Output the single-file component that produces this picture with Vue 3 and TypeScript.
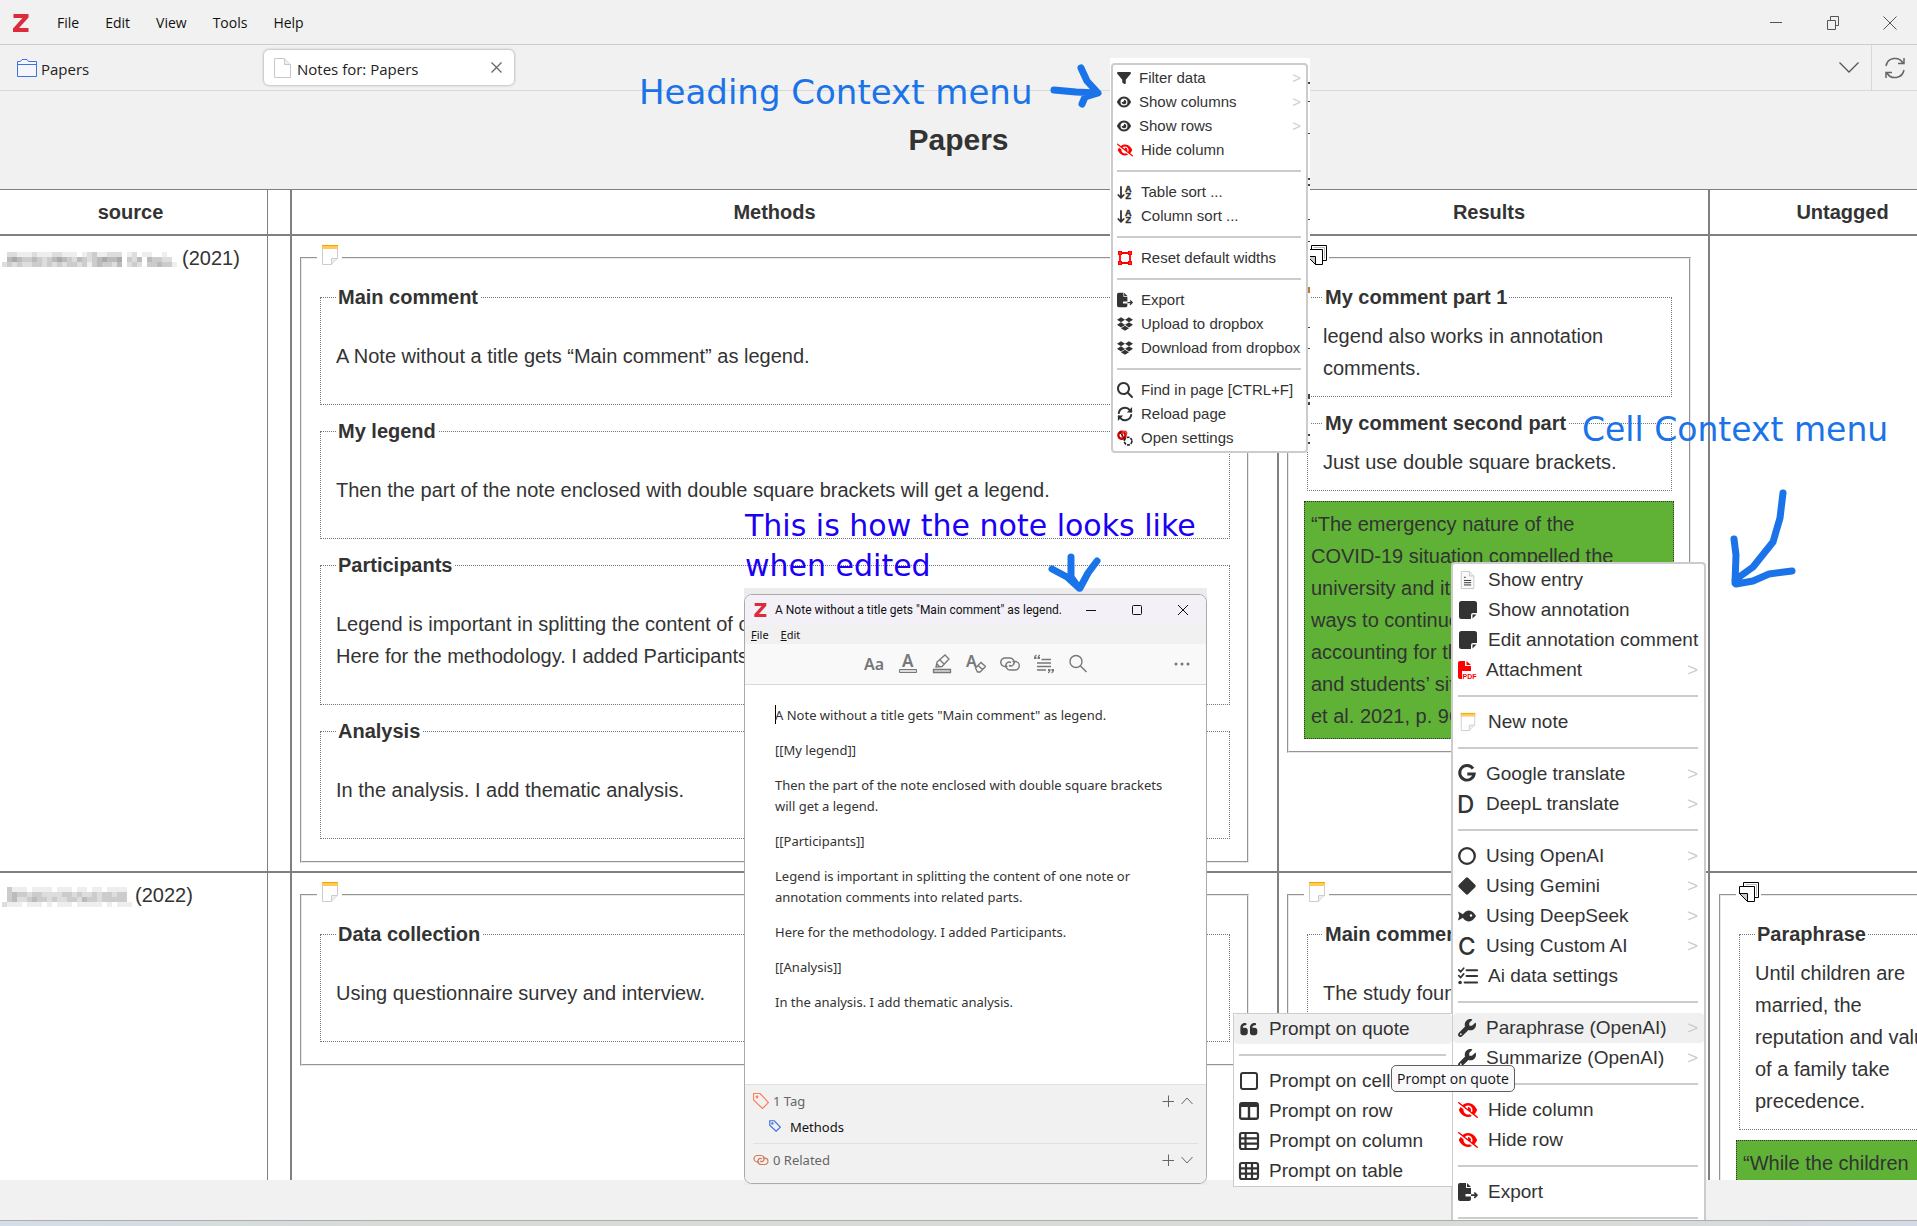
<script setup lang="ts">
interface MenuRow {
  icon: string
  label: string
  wide?: boolean
  more?: boolean
  danger?: boolean
  active?: boolean
}
interface Part {
  legend?: string
  lines: string[]
  spaced?: boolean
  quote?: boolean
}
interface Card {
  kind: 'note' | 'annotation'
  parts: Part[]
}
interface PaperRow {
  year: string
  mask: string[]
  maskWidth: number
  cells: (Card | null)[]
}

const eye =
  'M288 32c-80.8 0-145.5 36.8-192.6 80.6C48.6 156 17.3 208 2.5 243.7c-3.3 7.9-3.3 16.7 0 24.6C17.3 304 48.6 356 95.4 399.4C142.5 443.2 207.2 480 288 480s145.5-36.8 192.6-80.6c46.8-43.5 78.1-95.4 93-131.1c3.3-7.9 3.3-16.7 0-24.6c-14.9-35.7-46.2-87.7-93-131.1C433.5 68.8 368.8 32 288 32zM144 256a144 144 0 1 1 288 0 144 144 0 1 1 -288 0zm144-64c0 35.3-28.7 64-64 64c-7.1 0-13.9-1.2-20.3-3.3c-5.5-1.8-11.9 1.6-11.7 7.4c.3 6.9 1.3 13.8 3.2 20.7c13.7 51.2 66.4 81.6 117.6 67.9s81.6-66.4 67.9-117.6c-11.1-41.5-47.8-69.4-88.6-71.1c-5.8-.2-9.2 6.1-7.4 11.7c2.1 6.4 3.3 13.2 3.3 20.3z'
const eyeSlash =
  'M38.8 5.1C28.4-3.1 13.3-1.2 5.1 9.2S-1.2 34.7 9.2 42.9l592 464c10.4 8.2 25.5 6.3 33.7-4.1s6.3-25.5-4.1-33.7L525.6 386.7c39.6-40.6 66.4-86.1 79.9-118.4c3.3-7.9 3.3-16.7 0-24.6c-14.9-35.7-46.2-87.7-93-131.1C465.5 68.8 400.8 32 320 32c-68.2 0-125 26.3-169.3 60.8L38.8 5.1zM223.1 149.5C248.6 126.2 282.7 112 320 112c79.5 0 144 64.5 144 144c0 24.9-6.3 48.3-17.4 68.7L408 294.5c8.4-19.3 10.6-41.4 4.8-63.3c-11.1-41.5-47.8-69.4-88.6-71.1c-5.8-.2-9.2 6.1-7.4 11.7c2.1 6.4 3.3 13.2 3.3 20.3c0 10.2-2.4 19.8-6.6 28.3l-90.3-70.8zM373 389.9c-16.4 6.5-34.3 10.1-53 10.1c-79.5 0-144-64.5-144-144c0-6.9 .5-13.6 1.4-20.2L83.1 161.5C60.3 191.2 44 220.8 34.5 243.7c-3.3 7.9-3.3 16.7 0 24.6c14.9 35.7 46.2 87.7 93 131.1C174.5 443.2 239.2 480 320 480c47.8 0 89.9-12.9 126.2-32.5L373 389.9z'

// Each entry: viewBox and the inner markup of the icon.
const icons: Record<string, [string, string]> = {
  filter: ['0 0 512 512', '<path d="M3.9 54.9C10.5 40.9 24.5 32 40 32H472c15.5 0 29.5 8.9 36.1 22.9s4.6 30.5-5.2 42.5L320 320.9V448c0 12.1-6.8 23.2-17.7 28.6s-23.8 4.3-33.5-3l-64-48c-8.1-6-12.8-15.5-12.8-25.6V320.9L9 97.3C-.7 85.4-2.8 68.8 3.9 54.9z"/>'],
  eye: ['0 0 576 512', `<path d="${eye}"/>`],
  hide: ['0 0 640 512', `<path d="${eyeSlash}"/>`],
  sort: ['0 0 16 16', '<path d="M4 3v10.500M1.300 11L4 13.800 6.700 11" fill="none" stroke="currentColor" stroke-width="1.800" stroke-linecap="round" stroke-linejoin="round"/><text x="8" y="8" font-family="Liberation Sans, sans-serif" font-weight="700" font-size="9" stroke="currentColor" stroke-width="0.500">A</text><text x="8.500" y="15" font-family="Liberation Sans, sans-serif" font-weight="700" font-size="9" stroke="currentColor" stroke-width="0.500">Z</text>'],
  frame: ['0 0 16 16', '<path d="M3 3h10v10H3z" fill="none" stroke="currentColor" stroke-width="1.800"/><path d="M1 1h4v4H1zM11 1h4v4h-4zM1 11h4v4H1zM11 11h4v4h-4z"/><path d="M2.500 2.500h1v1h-1zM12.500 2.500h1v1h-1zM2.500 12.500h1v1h-1zM12.500 12.500h1v1h-1z" fill="#faa"/>'],
  export: ['0 0 20 18', '<path d="M0 2a2 2 0 0 1 2-2h6v5h5v6H7.500v2.400H13V16a2 2 0 0 1-2 2H2a2 2 0 0 1-2-2z"/><path d="M9 0l4 4H9z"/><path d="M13 12.200h6M16.300 9.500l2.700 2.700-2.700 2.700" fill="none" stroke="currentColor" stroke-width="1.700" stroke-linejoin="round"/>'],
  dropbox: ['0 0 528 512', '<path d="M264.4 116.300l-132 84.300 132 84.300-132 84.300L0 284.100l132.300-84.300L0 116.300 132.300 32l132.100 84.300zM131.600 395.700l132-84.300 132 84.300-132 84.300-132-84.300zm132.800-111.600l132-84.300-132-83.600L395.700 32 528 116.300l-132.300 84.300L528 284.800l-132.300 84.300-131.300-85z"/>'],
  search: ['0 0 512 512', '<path d="M416 208c0 45.900-14.900 88.300-40 122.700L502.600 457.400c12.500 12.500 12.500 32.800 0 45.300s-32.800 12.500-45.300 0L330.700 376c-34.400 25.200-76.800 40-122.700 40C93.100 416 0 322.900 0 208S93.100 0 208 0S416 93.100 416 208zM208 352a144 144 0 1 0 0-288 144 144 0 1 0 0 288z"/>'],
  reload: ['0 0 18 18', '<path d="M2 8a7.100 7.100 0 0 1 12.500-3.400L16 6.200M16 10a7.100 7.100 0 0 1-12.500 3.400L2 11.800" fill="none" stroke="currentColor" stroke-width="2.200" stroke-linecap="round"/><path d="M17 1.200v6h-6zM1 16.800v-6h6z"/>'],
  settings: ['0 0 18 18', '<circle cx="5.500" cy="6" r="4" fill="none" stroke="#c00" stroke-width="2.600"/><path d="M6 9V3.500q0-2 3-2 3 1 1 4.500" fill="none" stroke="#e33" stroke-width="1.800"/><path d="M3 2l5 7" stroke="#600" stroke-width="1.300"/><circle cx="12.500" cy="12.500" r="4.300" fill="#fff" stroke="#222" stroke-width="1.800" stroke-dasharray="3.400 1.100"/>'],
  entry: ['0 0 18 20', '<path d="M1.500.500h9l5 5v14h-14z" fill="#fafafa" stroke="#c4c4c4"/><path d="M10.500.500v5h5" fill="#eee" stroke="#c4c4c4"/><path d="M4.500 7h2M4.500 10.500h8M4.500 13h8M4.500 15.500h8" stroke="#333" stroke-width="1.100"/>'],
  sticky: ['0 0 18 18', '<path d="M2.500 0h13A2.500 2.500 0 0 1 18 2.500V12h-4a2 2 0 0 0-2 2v4H2.500A2.500 2.500 0 0 1 0 15.500v-13A2.500 2.500 0 0 1 2.500 0z"/><path d="M13.500 17.500v-4h4z"/>'],
  pdf: ['0 0 18 18', '<path d="M0 2a2 2 0 0 1 2-2h5v5h6v5H4v8H2a2 2 0 0 1-2-2z"/><path d="M8.500 0L13 4H8.500z"/><text x="4.500" y="17.800" font-family="Liberation Sans, sans-serif" font-weight="700" font-size="7">PDF</text>'],
  note: ['0 0 18 20', '<path d="M1.500.500h15v13l-6 6h-9z" fill="#fff" stroke="#ccc"/><path d="M16.500 13.500h-6v6" fill="#eee" stroke="#ccc"/><path d="M1 0h16v4H1z" fill="#ffca5c"/><path d="M1 .500h16" stroke="#f5a300"/>'],
  google: ['0 0 18 18', '<path d="M15 3.600A7.300 7.300 0 1 0 16.200 9H9.300" fill="none" stroke="currentColor" stroke-width="2.900"/>'],
  dletter: ['0 0 18 18', '<text x="-1" y="17.500" font-family="Inter, sans-serif" font-weight="500" font-size="24">D</text>'],
  cletter: ['0 0 18 18', '<text x="0" y="17.500" font-family="Inter, sans-serif" font-weight="500" font-size="24">C</text>'],
  ring: ['0 0 18 18', '<circle cx="9" cy="9" r="7.800" fill="none" stroke="currentColor" stroke-width="2.300"/>'],
  diamond: ['0 0 18 18', '<path d="M9 .200q.700 0 1.300.700l6.900 6.900q1.200 1.200 0 2.400l-6.900 6.900q-1.300 1.300-2.600 0L.800 10.200q-1.200-1.200 0-2.400L7.700.900Q8.300.200 9 .200z"/>'],
  fish: ['0 0 18 18', '<path d="M0 4.500q2.500 1 4.800 2.800Q7.500 3.500 11 3.500 15 3.800 18 9q-3 5.200-7 5.500-3.500 0-6.200-3.800Q2.500 12.500 0 13.500L1.200 9z"/><circle cx="13" cy="8.500" r="1.200" fill="#fff"/>'],
  tasks: ['0 0 21 18', '<path d="M9 3h11M9 9h11M7 15.800h13" stroke="currentColor" stroke-width="2.200" stroke-linecap="round"/><path d="M.800 2.600l2 2L6 .800M.800 8.600l2 2L6 6.800" fill="none" stroke="currentColor" stroke-width="1.800" stroke-linecap="round"/><circle cx="2.200" cy="15.800" r="1.900"/>'],
  wrench: ['0 0 512 512', '<path d="M352 320c88.400 0 160-71.600 160-160c0-15.300-2.200-30.100-6.200-44.200c-3.100-10.800-16.400-13.200-24.300-5.300l-76.800 76.800c-3 3-7.100 4.700-11.300 4.700H336c-8.800 0-16-7.200-16-16V118.600c0-4.200 1.700-8.300 4.700-11.300l76.800-76.800c7.900-7.900 5.400-21.200-5.300-24.300C382.100 2.200 367.300 0 352 0C263.600 0 192 71.600 192 160c0 19.100 3.400 37.500 9.500 54.500L19.900 396.100C7.200 408.800 0 426.100 0 444.100C0 481.600 30.400 512 67.900 512c18 0 35.300-7.200 48-19.900L297.500 310.500c17 6.200 35.400 9.500 54.500 9.500zM80 408a24 24 0 1 1 0 48 24 24 0 1 1 0-48z"/>'],
  quote: ['20 20 410 470', '<path d="M0 216C0 149.700 53.700 96 120 96h8c17.700 0 32 14.300 32 32s-14.300 32-32 32h-8c-30.900 0-56 25.100-56 56v8h64c35.300 0 64 28.700 64 64v64c0 35.300-28.700 64-64 64H64c-35.300 0-64-28.700-64-64V216zm250 0c0-66.300 53.700-120 120-120h8c17.700 0 32 14.300 32 32s-14.300 32-32 32h-8c-30.900 0-56 25.100-56 56v8h64c35.300 0 64 28.700 64 64v64c0 35.300-28.700 64-64 64h-64c-35.300 0-64-28.700-64-64V216z"/>'],
  square: ['0 0 20 18', '<rect x="2" y="1" width="16" height="16" rx="2" fill="none" stroke="currentColor" stroke-width="2"/>'],
  columns: ['0 0 20 18', '<path d="M3 0h14a3 3 0 0 1 3 3v12a3 3 0 0 1-3 3H3a3 3 0 0 1-3-3V3a3 3 0 0 1 3-3zM2.200 5v10.600h6.600V5zM11.200 5v10.600h6.600V5z" fill-rule="evenodd"/>'],
  list: ['0 0 20 18', '<rect x="1" y="1" width="18" height="16" rx="2" fill="none" stroke="currentColor" stroke-width="2.200"/><path d="M1 6.300h18M1 11.700h18M6.500 1v16" stroke="currentColor" stroke-width="2.200"/>'],
  table: ['0 0 20 18', '<rect x="1" y="1" width="18" height="16" rx="2" fill="none" stroke="currentColor" stroke-width="2.200"/><path d="M1 6.300h18M1 11.700h18M7 1v16M13 1v16" stroke="currentColor" stroke-width="2.200"/>'],
  copy: ['0 0 20 20', '<path d="M4.500.500h15v15h-15z" fill="#fff" stroke="#000"/><path d="M6.500 2.500h11v11" fill="none" stroke="#bbb"/><path d="M.500 4.500h15v15h-7l-8-8z" fill="#fff" stroke="#000"/><path d="M.500 11.500h8v8z" fill="#ccc" stroke="#000"/>'],
}

const headingMenu: MenuRow[][] = [
  [
    { icon: 'filter', label: 'Filter data', more: true },
    { icon: 'eye', label: 'Show columns', more: true },
    { icon: 'eye', label: 'Show rows', more: true },
    { icon: 'hide', label: 'Hide column', wide: true, danger: true },
  ],
  [
    { icon: 'sort', label: 'Table sort ...', wide: true },
    { icon: 'sort', label: 'Column sort ...', wide: true },
  ],
  [{ icon: 'frame', label: 'Reset default widths', wide: true, danger: true }],
  [
    { icon: 'export', label: 'Export', wide: true },
    { icon: 'dropbox', label: 'Upload to dropbox', wide: true },
    { icon: 'dropbox', label: 'Download from dropbox', wide: true },
  ],
  [
    { icon: 'search', label: 'Find in page [CTRL+F]', wide: true },
    { icon: 'reload', label: 'Reload page', wide: true },
    { icon: 'settings', label: 'Open settings', wide: true },
  ],
]

const cellMenu: MenuRow[][] = [
  [
    { icon: 'entry', label: 'Show entry', wide: true },
    { icon: 'sticky', label: 'Show annotation', wide: true },
    { icon: 'sticky', label: 'Edit annotation comment', wide: true },
    { icon: 'pdf', label: 'Attachment', more: true, danger: true },
  ],
  [{ icon: 'note', label: 'New note', wide: true }],
  [
    { icon: 'google', label: 'Google translate', more: true },
    { icon: 'dletter', label: 'DeepL translate', more: true },
  ],
  [
    { icon: 'ring', label: 'Using OpenAI', more: true },
    { icon: 'diamond', label: 'Using Gemini', more: true },
    { icon: 'fish', label: 'Using DeepSeek', more: true },
    { icon: 'cletter', label: 'Using Custom AI', more: true },
    { icon: 'tasks', label: 'Ai data settings', wide: true },
  ],
  [
    { icon: 'wrench', label: 'Paraphrase (OpenAI)', more: true, active: true },
    { icon: 'wrench', label: 'Summarize (OpenAI)', more: true },
  ],
  [
    { icon: 'hide', label: 'Hide column', wide: true, danger: true },
    { icon: 'hide', label: 'Hide row', wide: true, danger: true },
  ],
  [{ icon: 'export', label: 'Export', wide: true }],
  [],
]

const promptMenu: MenuRow[][] = [
  [{ icon: 'quote', label: 'Prompt on quote', wide: true, active: true }],
  [
    { icon: 'square', label: 'Prompt on cell', wide: true },
    { icon: 'columns', label: 'Prompt on row', wide: true },
    { icon: 'list', label: 'Prompt on column', wide: true },
    { icon: 'table', label: 'Prompt on table', wide: true },
  ],
]

const columns = ['source', '', 'Methods', 'Results', 'Untagged']

const papers: PaperRow[] = [
  {
    year: '(2021)',
    maskWidth: 180,
    mask: [
      'fddeeedeeeddeeefedceedddfedfeeffefff',
      'fbabccbcdcbabcdbcdcbabbafcdbfbccddff',
      'dcdcddccdcdcdccdcecbccdbfdcdfccbccef',
    ],
    cells: [
      null,
      {
        kind: 'note',
        parts: [
          { legend: 'Main comment', spaced: true, lines: ['A Note without a title gets “Main comment” as legend.'] },
          { legend: 'My legend', spaced: true, lines: ['Then the part of the note enclosed with double square brackets will get a legend.'] },
          {
            legend: 'Participants',
            spaced: true,
            lines: [
              'Legend is important in splitting the content of o',
              'Here for the methodology. I added Participants',
            ],
          },
          { legend: 'Analysis', spaced: true, lines: ['In the analysis. I add thematic analysis.'] },
        ],
      },
      {
        kind: 'annotation',
        parts: [
          { legend: 'My comment part 1', lines: ['legend also works in annotation', 'comments.'] },
          { legend: 'My comment second part', lines: ['Just use double square brackets.'] },
          {
            quote: true,
            lines: [
              '“The emergency nature of the',
              'COVID-19 situation compelled the',
              'university and its',
              'ways to continue',
              'accounting for th',
              'and students’ sit',
              'et al. 2021, p. 96',
            ],
          },
        ],
      },
      null,
    ],
  },
  {
    year: '(2022)',
    maskWidth: 133,
    mask: [
      'fceeefeeeefeeefeefeefeeeef',
      'fcbccdccddddccdcddcdccdccf',
      'fcbddcbccdcddccdbccdcccccf',
      'deeefeeefefeeefeeeeefefeee',
    ],
    cells: [
      null,
      { kind: 'note', parts: [{ legend: 'Data collection', spaced: true, lines: ['Using questionnaire survey and interview.'] }] },
      { kind: 'note', parts: [{ legend: 'Main comment', spaced: true, lines: ['The study foun'] }] },
      {
        kind: 'annotation',
        parts: [
          {
            legend: 'Paraphrase',
            lines: ['Until children are', 'married, the', 'reputation and value', 'of a family take', 'precedence.'],
          },
          { quote: true, lines: ['“While the children'] },
        ],
      },
    ],
  },
]

const noteText = [
  'A Note without a title gets "Main comment" as legend.',
  '[[My legend]]',
  'Then the part of the note enclosed with double square brackets will get a legend.',
  '[[Participants]]',
  'Legend is important in splitting the content of one note or annotation comments into related parts.',
  'Here for the methodology. I added Participants.',
  '[[Analysis]]',
  'In the analysis. I add thematic analysis.',
]

const menus = [
  { name: 'heading-menu', label: 'Heading Context menu', groups: headingMenu },
  { name: 'cell-menu', label: 'Cell Context menu', groups: cellMenu },
  { name: 'prompt-menu', label: 'Paraphrase', groups: promptMenu },
]
</script>

<template>
  <div class="app">
    <header class="menubar">
      <svg class="logo" viewBox="0 0 16 18" aria-label="Zotero"><path d="M.5 0h15v3.600L6 14h9.500v4H0v-3.600L9.500 4h-9z" fill="#db2c3a" /></svg>
      <nav class="menus">
        <button v-for="m in ['File', 'Edit', 'View', 'Tools', 'Help']" :key="m" type="button">{{ m }}</button>
      </nav>
      <div class="window-buttons">
        <button type="button" aria-label="Minimize"><svg width="14" height="14" viewBox="0 0 14 14"><path d="M1 6.500h12" /></svg></button>
        <button type="button" aria-label="Restore"><svg width="14" height="14" viewBox="0 0 14 14"><path d="M1.500 4.500h8v9h-8zM4.500 4.500v-4h8v9h-3" /></svg></button>
        <button type="button" aria-label="Close"><svg width="14" height="14" viewBox="0 0 14 14"><path d="M.500.500l13 13M13.500.500l-13 13" /></svg></button>
      </div>
    </header>

    <div class="tabbar">
      <button type="button" class="tab library">
        <svg width="20" height="18" viewBox="0 0 20 18" fill="#f4f6fc" stroke="#3f73e0"><path d="M.500 17.500v-15h3l1.500-2h5l1.500 2h8v15z" /><path d="M.500 5.500h19" /></svg>
        <span>Papers</span>
      </button>
      <div class="tab current">
        <svg width="17" height="20" viewBox="0 0 17 20" fill="#fff" stroke="#c8c8c8"><path d="M.500.500h10l6 6v13h-16z" /><path d="M10.500.500v6h6" fill="#eee" /></svg>
        <span>Notes for: Papers</span>
        <button type="button" class="tab-close" aria-label="Close tab"><svg width="11" height="11" viewBox="0 0 11 11"><path d="M.500.500l10 10M10.500.500l-10 10" stroke="#666" stroke-width="1.300" /></svg></button>
      </div>
      <button type="button" class="more-tabs" aria-label="List all tabs"><svg width="20" height="11" viewBox="0 0 20 11"><path d="M.500.500L10 10l9.500-9.500" fill="none" stroke="#555" stroke-width="1.300" /></svg></button>
      <button type="button" class="sync" aria-label="Sync"><svg width="20" height="22" viewBox="0 0 20 22"><path d="M1 9A9.200 9.200 0 0 1 18 6M19 13A9.200 9.200 0 0 1 2 16M19 1v5.500h-6M1 21v-5.500h6" fill="none" stroke="#666" stroke-width="1.500" /></svg></button>
    </div>

    <h1>Papers</h1>

    <main class="sheet">
      <table>
        <colgroup>
          <col class="c-source" /><col class="c-grip" /><col /><col class="c-results" /><col class="c-untagged" />
        </colgroup>
        <thead>
          <tr><th v-for="(c, i) in columns" :key="i" scope="col">{{ c }}</th></tr>
        </thead>
        <tbody>
          <tr v-for="paper in papers" :key="paper.year">
            <td>
              <svg class="mask" :width="paper.maskWidth" :height="paper.mask.length * 5" shape-rendering="crispEdges" aria-hidden="true">
                <template v-for="(line, r) in paper.mask" :key="r">
                  <rect v-for="(g, i) in line.split('')" :key="i" :x="i * 5" :y="r * 5" width="5" height="5" :fill="'#' + g + g + g" />
                </template>
              </svg>{{ paper.year }}
            </td>
            <td v-for="(card, i) in paper.cells" :key="i">
              <fieldset v-if="card" class="card">
                <legend>
                  <svg v-if="card.kind === 'note'" width="18" height="20" viewBox="0 0 18 20" v-html="icons.note[1]" />
                  <svg v-else width="20" height="20" viewBox="0 0 20 20" v-html="icons.copy[1]" />
                </legend>
                <template v-for="part in card.parts" :key="part.lines[0]">
                  <div v-if="part.quote" class="quote">{{ part.lines.join('\n') }}</div>
                  <fieldset v-else class="part">
                    <legend>{{ part.legend }}</legend>
                    <p :class="{ spaced: part.spaced }">{{ part.lines.join('\n') }}</p>
                  </fieldset>
                </template>
              </fieldset>
            </td>
          </tr>
        </tbody>
      </table>
    </main>
    <footer class="statusbar"></footer>
    <div class="desktop-edge"></div>

    <div class="callout heading-callout">Heading Context menu</div>
    <div class="callout cell-callout">Cell Context menu</div>
    <div class="callout note-callout">This is how the note looks like<br />when edited</div>

    <div class="note-backdrop">
      <section class="note-window" aria-label="Note editor">
        <header class="note-title">
          <svg class="note-logo" viewBox="0 0 16 18"><path d="M.500 0h15v3.600L6 14h9.500v4H0v-3.600L9.500 4h-9z" fill="#db2c3a" /></svg>
          <span>A Note without a title gets "Main comment" as legend.</span>
          <div class="note-buttons">
            <button type="button" aria-label="Minimize"><svg width="12" height="12" viewBox="0 0 12 12"><path d="M1 6.500h10" /></svg></button>
            <button type="button" aria-label="Maximize"><svg width="12" height="12" viewBox="0 0 12 12"><rect x="1.500" y="1.500" width="9" height="9" rx="1" /></svg></button>
            <button type="button" aria-label="Close"><svg width="12" height="12" viewBox="0 0 12 12"><path d="M1 1l10 10M11 1L1 11" /></svg></button>
          </div>
        </header>
        <nav class="note-menus">
          <button type="button"><u>F</u>ile</button>
          <button type="button"><u>E</u>dit</button>
        </nav>
        <div class="note-tools">
          <button type="button" class="text-tool">Aa</button>
          <button type="button" aria-label="Text color">
            <svg width="20" height="20" viewBox="0 0 20 20"><text x="4" y="13" class="tool-letter" font-size="17">A</text><path d="M1.500 15.500h17v3h-17z" fill="#ddd" stroke="#777" /></svg>
          </button>
          <button type="button" aria-label="Highlight">
            <svg width="20" height="20" viewBox="0 0 20 20" fill="none" stroke="#777" stroke-width="1.300"><path d="M1.500 15.500h17v3h-17z" fill="#ddd" /><path d="M4 13l1-5 8-7 4 4-7 7.500zM8 6l4 4M4.500 9.500L8 13" /></svg>
          </button>
          <button type="button" aria-label="Clear formatting">
            <svg width="20" height="20" viewBox="0 0 20 20" fill="none" stroke="#777" stroke-width="1.400"><text x="0" y="13" class="tool-letter" stroke="none" font-size="16">A</text><path d="M9.500 14L15 8.500l4.500 4L14 18h-2.500zM12 11.500l4.500 4" /></svg>
          </button>
          <button type="button" aria-label="Insert link">
            <svg width="20" height="16" viewBox="0 0 20 16" fill="none" stroke="#777" stroke-width="1.400"><path d="M7.500 10.500H5A4.200 4.200 0 0 1 5 2h5a4.200 4.200 0 0 1 3.500 6.500Q12 11 9 9.500" /><path d="M12.500 5.500H15a4.200 4.200 0 0 1 0 8.500h-5a4.200 4.200 0 0 1-3.500-6.500Q8 5 11 6.500" /></svg>
          </button>
          <button type="button" aria-label="Insert citation">
            <svg width="20" height="20" viewBox="0 0 20 20"><path d="M7.500 5.500H17M3 9h14M3 12.500h14M3 16h9" stroke="#777" stroke-width="1.300" /><path d="M0 4q0-3 2.500-3.500V2q-1 .500-1 1h1v2H0zM3.500 4q0-3 2.500-3.500V2q-1 .500-1 1h1v2H3.500zM14 15h2.500v1.500q0 2-2.500 3V18q1-.500 1-1h-1zM17.500 15H20v1.500q0 2-2.500 3V18q1-.500 1-1h-1z" fill="#777" /></svg>
          </button>
          <button type="button" aria-label="Find">
            <svg width="20" height="20" viewBox="0 0 20 20" fill="none" stroke="#777" stroke-width="1.400"><circle cx="8" cy="7.500" r="6" /><path d="M12.500 12l6 6" /></svg>
          </button>
          <button type="button" class="dots" aria-label="More">
            <svg width="18" height="4" viewBox="0 0 18 4" fill="#777"><circle cx="3" cy="2" r="1.500" /><circle cx="9" cy="2" r="1.500" /><circle cx="15" cy="2" r="1.500" /></svg>
          </button>
        </div>
        <div class="note-body">
          <p v-for="t in noteText" :key="t">{{ t }}</p>
        </div>
        <div class="note-foot">
          <div class="foot-row">
            <svg width="16" height="16" viewBox="0 0 16 16" fill="none" stroke="#ff7e5a" stroke-width="1.200"><path d="M.500.500h6.500l8.500 9-6 6L.500 7z" /><circle cx="4" cy="4" r=".800" /></svg>
            <span>1 Tag</span>
            <svg class="plus" width="12" height="12" viewBox="0 0 12 12" fill="none" stroke="#666"><path d="M6.500.500v12M.500 6.500h12" /></svg>
            <svg width="12" height="12" viewBox="0 0 12 12" fill="none" stroke="#666"><path d="M.500 9L6 3l5.500 6" /></svg>
          </div>
          <div class="foot-tag">
            <svg width="12" height="12" viewBox="0 0 16 16" fill="none" stroke="#4072e5" stroke-width="1.600"><path d="M1 1h6l8 8.500L9.500 15 1 7z" /><circle cx="4.500" cy="4.500" r=".800" /></svg>
            <span>Methods</span>
          </div>
          <div class="foot-row related">
            <svg width="16" height="12" viewBox="0 0 20 16" fill="none" stroke="#d0795a" stroke-width="1.600"><path d="M7.500 10.500H5A4.200 4.200 0 0 1 5 2h5a4.200 4.200 0 0 1 3.500 6.500Q12 11 9 9.500" /><path d="M12.500 5.500H15a4.200 4.200 0 0 1 0 8.500h-5a4.200 4.200 0 0 1-3.500-6.500Q8 5 11 6.500" /></svg>
            <span>0 Related</span>
            <svg class="plus" width="12" height="12" viewBox="0 0 12 12" fill="none" stroke="#666"><path d="M6.500.500v12M.500 6.500h12" /></svg>
            <svg width="12" height="12" viewBox="0 0 12 12" fill="none" stroke="#666"><path d="M.500 3L6 9l5.500-6" /></svg>
          </div>
        </div>
      </section>
    </div>

    <svg class="menu-backdrop" width="200" height="394" viewBox="0 0 200 394" aria-hidden="true">
      <path d="M0 0h200v394H0z" fill="#fff" />
      <path d="M199 24v2M199 43v1M199 75v1M199 120v2M199 126v2M199 161v1M199 183v1M199 269v1M199 290v1M199 336v5M199 344v3M199 376v2M199 384v2" stroke="#444" stroke-width="2" />
      <path d="M199 229v6" stroke="#c07a30" stroke-width="2" />
    </svg>
    <div v-for="menu in menus" :key="menu.name" class="context-menu" :class="menu.name" role="menu" :aria-label="menu.label">
      <template v-for="(group, g) in menu.groups" :key="g">
        <hr v-if="g > 0" />
        <button v-for="row in group" :key="row.label" type="button" role="menuitem" :class="{ active: row.active }">
          <svg class="icon" :class="{ wide: row.wide, danger: row.danger }" :viewBox="icons[row.icon][0]" v-html="icons[row.icon][1]" />
          <span>{{ row.label }}</span>
          <span v-if="row.more" class="arrow">&gt;</span>
        </button>
      </template>
    </div>
    <div class="tooltip" role="tooltip">Prompt on quote</div>

    <svg class="ink heading-ink" width="60" height="60" viewBox="1046 58 60 60"><path d="M1054 90l22 2 21 1M1081 68l6 13 11 12-13 4-3 7" /></svg>
    <svg class="ink note-ink" width="60" height="48" viewBox="1044 548 60 48"><path d="M1052 569l15 8 12 11M1071 557v20l8 11M1097 561l-9 12-8 15" /></svg>
    <svg class="ink cell-ink" width="80" height="110" viewBox="1724 484 80 110"><path d="M1783 493l-3 25-7 24-20 25-18 13M1734 539l2 16-1 28M1792 571l-23 3-16 7-17 3" /></svg>
  </div>
</template>

<style>
html,
body {
  height: 100%;
  overflow: hidden;
}
#app {
  height: 100%;
}
</style>

<style scoped>
.app {
  position: relative;
  display: flex;
  flex-direction: column;
  height: 100%;
  overflow: hidden;
  background: #f1f1f1;
  color: #333;
  font: 20px/32px "Liberation Sans", Arial, sans-serif;
}
button {
  margin: 0;
  padding: 0;
  border: 0;
  background: none;
  color: inherit;
  font: inherit;
  text-align: left;
}
svg {
  flex: none;
}
.menubar,
.tabbar,
.tooltip {
  font-family: "Open Sans", "Noto Sans", sans-serif;
}
.menubar {
  display: flex;
  align-items: center;
  box-sizing: border-box;
  height: 45px;
  padding: 1px 20px 0 13px;
  border-bottom: 1px solid #ccc;
  color: #111;
  font-size: 14px;
  line-height: 20px;
}
.logo {
  width: 16px;
  height: 18px;
}
.menus {
  display: flex;
  gap: 26px;
  margin-left: 28px;
}
.window-buttons {
  display: flex;
  gap: 43px;
  margin-left: auto;
}
.window-buttons button {
  display: flex;
}
.window-buttons svg {
  fill: none;
  stroke: #555;
}
.tabbar {
  display: flex;
  align-items: center;
  height: 45px;
  border-bottom: 1px solid #d8d8d8;
  color: #222;
  font-size: 15px;
  line-height: 20px;
}
.tab {
  display: flex;
  align-items: center;
}
.tab span {
  padding-top: 3px;
}
.library {
  width: 264px;
  padding-left: 17px;
  gap: 4px;
}
.current {
  width: 228px;
  height: 35px;
  padding: 0 12px 0 10px;
  border-radius: 5px;
  background: #fff;
  box-shadow: 0 0 3px rgba(0, 0, 0, 0.4);
  gap: 6px;
}
.tab-close {
  display: flex;
  margin-left: auto;
}
.more-tabs {
  display: flex;
  margin-left: auto;
  padding-right: 12px;
}
.sync {
  display: flex;
  align-items: center;
  height: 45px;
  padding: 0 12px 0 13px;
  border-left: 1px solid #d8d8d8;
}
h1 {
  margin: 0;
  padding: 33px 0;
  font-size: 30px;
  line-height: 32px;
  text-align: center;
}
.sheet {
  flex: 1;
  min-height: 0;
  overflow: hidden;
  background: #fff;
  border-top: 1px solid #808080;
}
table {
  width: calc(100% + 58px);
  table-layout: fixed;
  border-spacing: 0;
}
.c-source {
  width: 268px;
}
.c-grip {
  width: 24px;
}
.c-results {
  width: 431px;
}
.c-untagged {
  width: 265px;
}
th,
td {
  padding: 6px 0 8px;
  border-right: 2px solid #808080;
  border-bottom: 2px solid #808080;
  vertical-align: top;
  text-align: left;
  white-space: pre;
}
th {
  padding: 6px 0;
  text-align: center;
}
th:nth-child(1),
td:nth-child(1) {
  padding-left: 2px;
  padding-right: 8px;
  border-right-width: 1px;
  white-space: nowrap;
}
th:nth-child(3),
td:nth-child(3) {
  padding-left: 8px;
  padding-right: 28px;
}
th:nth-child(4),
td:nth-child(4) {
  padding-left: 8px;
  padding-right: 17px;
}
th:nth-child(5),
td:nth-child(5) {
  padding-left: 9px;
  padding-right: 7px;
}
tbody tr:last-child td {
  height: 400px;
}
.mask {
  vertical-align: middle;
}
.card {
  margin: 0;
  padding: 7px 15px 12px;
  border: 2px groove #e8e8e8;
  min-width: 0;
}
.card > legend {
  display: flex;
  align-items: flex-start;
  justify-content: center;
  box-sizing: border-box;
  min-width: 25px;
  height: 32px;
  padding: 3px 0 0;
}
.part {
  margin: 0 2px 10px 3px;
  padding: 7px 15px 12px;
  border: 1px dotted #777;
  min-width: 0;
}
.part > legend {
  padding: 0 2px;
  font-weight: 700;
}
.part p {
  margin: 0;
}
.part .spaced {
  margin: 20px 0;
}
.quote {
  padding: 6px;
  border: 1px dotted #333;
  background: #5fb236;
}
.statusbar {
  height: 40px;
}
.desktop-edge {
  height: 5px;
  border-top: 1px solid #aab0aa;
  background: linear-gradient(90deg, #d5dde8, #d8dbd8 20%, #d8dbd8 85%, #d5dae6);
}

/* Callouts drawn over the sheet */
.callout {
  position: absolute;
  color: #1a73e8;
  font-family: "DejaVu Sans", Verdana, sans-serif;
  line-height: 40px;
  white-space: nowrap;
}
.heading-callout {
  left: 639px;
  top: 72px;
  font-size: 34px;
}
.cell-callout {
  left: 1582px;
  top: 410px;
  font-size: 33px;
}
.note-callout {
  left: 745px;
  top: 506px;
  color: #1a00f5;
  font-size: 30px;
}
.ink {
  position: absolute;
  fill: none;
  stroke: #1a73e8;
  stroke-width: 7px;
  stroke-linecap: round;
  stroke-linejoin: round;
}
.heading-ink {
  left: 1046px;
  top: 58px;
}
.note-ink {
  left: 1044px;
  top: 548px;
}
.cell-ink {
  left: 1724px;
  top: 484px;
}

/* Context menus */
.menu-backdrop {
  position: absolute;
  left: 1110px;
  top: 58px;
}
.context-menu {
  position: absolute;
  display: flex;
  flex-direction: column;
  box-sizing: border-box;
  border: 2px solid #ccc;
  border-radius: 4px;
  background: #fff;
  white-space: nowrap;
}
.context-menu button {
  display: flex;
  align-items: center;
  flex: none;
}
.context-menu hr {
  flex: none;
  height: 2px;
  border: 0;
  background: #ccc;
}
.context-menu .active {
  border-radius: 4px;
  background: #f0f0f0;
}
.icon {
  fill: currentColor;
  overflow: visible;
}
.danger {
  color: #f00;
}
.arrow {
  margin-left: auto;
  color: #ccc;
}
.heading-menu {
  left: 1111px;
  top: 63px;
  width: 197px;
  padding: 1px 0;
  font-size: 15px;
  line-height: 24px;
}
.heading-menu button {
  gap: 8px;
  padding: 0 5px 0 4px;
}
.heading-menu hr {
  margin: 8px 5px 8px 4px;
}
.heading-menu .icon {
  width: 14px;
  height: 16px;
}
.heading-menu .wide {
  width: 16px;
}
.cell-menu {
  left: 1451px;
  top: 562px;
  bottom: 6px;
  width: 255px;
  padding-top: 1px;
  overflow: hidden;
  border-bottom: 0;
  border-radius: 4px 4px 0 0;
  font-size: 19px;
  line-height: 30px;
}
.cell-menu button,
.prompt-menu button {
  gap: 9px;
  padding: 0 6px 0 5px;
}
.cell-menu hr,
.prompt-menu hr {
  margin: 10px 6px 10px 5px;
}
.cell-menu .icon,
.prompt-menu .icon {
  width: 18px;
  height: 18px;
  margin-right: 1px;
}
.cell-menu .wide,
.prompt-menu .wide {
  width: 20px;
}
.prompt-menu {
  left: 1233px;
  top: 1013px;
  width: 219px;
  border-width: 1px;
  border-right: 0;
  border-radius: 0;
  font-size: 19px;
  line-height: 30px;
}
.tooltip {
  position: absolute;
  left: 1391px;
  top: 1065px;
  box-sizing: border-box;
  height: 27px;
  padding: 0 5px;
  border: 1px solid #5f5f5f;
  border-radius: 5px;
  background: #f9f9fb;
  color: #111;
  font-size: 14px;
  line-height: 26px;
  white-space: nowrap;
}

/* Note editor window */
.note-backdrop {
  position: absolute;
  left: 744px;
  top: 588px;
  box-sizing: border-box;
  width: 463px;
  height: 597px;
  padding-top: 6px;
  background: #ececec;
}
.note-window {
  display: flex;
  flex-direction: column;
  box-sizing: border-box;
  height: 590px;
  overflow: hidden;
  border: 1px solid #aaa;
  border-radius: 8px;
  background: #fff;
  font-family: "Noto Sans", "Open Sans", sans-serif;
}
.note-title {
  display: flex;
  align-items: center;
  height: 30px;
  padding: 0 17px 0 9px;
  background: #f3f0f8;
  color: #111;
  font-family: Roboto, "Open Sans", sans-serif;
  font-size: 12px;
  gap: 8px;
  white-space: nowrap;
}
.note-logo {
  width: 13px;
  height: 14px;
}
.note-buttons {
  display: flex;
  gap: 34px;
  margin-left: auto;
}
.note-buttons button {
  display: flex;
}
.note-buttons svg {
  fill: none;
  stroke: #111;
}
.note-menus {
  display: flex;
  gap: 12px;
  height: 19px;
  padding-left: 6px;
  background: #f1f1f1;
  color: #111;
  font-size: 11px;
  line-height: 19px;
}
.note-tools {
  display: flex;
  align-items: center;
  height: 40px;
  padding: 0 15px 0 119px;
  border-bottom: 1px solid #d9d9d9;
  background: #f9f9f9;
  color: #777;
  gap: 14px;
}
.note-tools button {
  display: flex;
}
.note-tools .text-tool {
  font-size: 16px;
  font-weight: 600;
  line-height: 20px;
}
.tool-letter {
  fill: #777;
  font-weight: 600;
}
.note-tools .dots {
  margin-left: auto;
}
.note-body {
  flex: 1;
  padding: 20px 40px 0 30px;
  color: #333;
  font-size: 13px;
  line-height: 21px;
}
.note-body p {
  margin: 0 0 14px;
}
.note-body p:first-child::before {
  content: "";
  float: left;
  width: 1px;
  height: 19px;
  margin-right: -1px;
  background: #000;
}
.note-foot {
  display: flex;
  flex-direction: column;
  height: 98px;
  padding: 0 8px;
  border-top: 1px solid #e0e0e0;
  background: #f1f1f1;
  color: #666;
  font-size: 13px;
  line-height: 20px;
}
.foot-row {
  display: flex;
  align-items: center;
  height: 32px;
  padding-right: 5px;
  gap: 4px;
}
.foot-row .plus {
  margin-left: auto;
  margin-right: 3px;
}
.foot-tag {
  display: flex;
  align-items: flex-start;
  height: 26px;
  padding-left: 16px;
  color: #111;
  gap: 9px;
}
.foot-tag svg {
  margin-top: 3px;
}
.related {
  border-top: 1px solid #e0e0e0;
}
</style>
